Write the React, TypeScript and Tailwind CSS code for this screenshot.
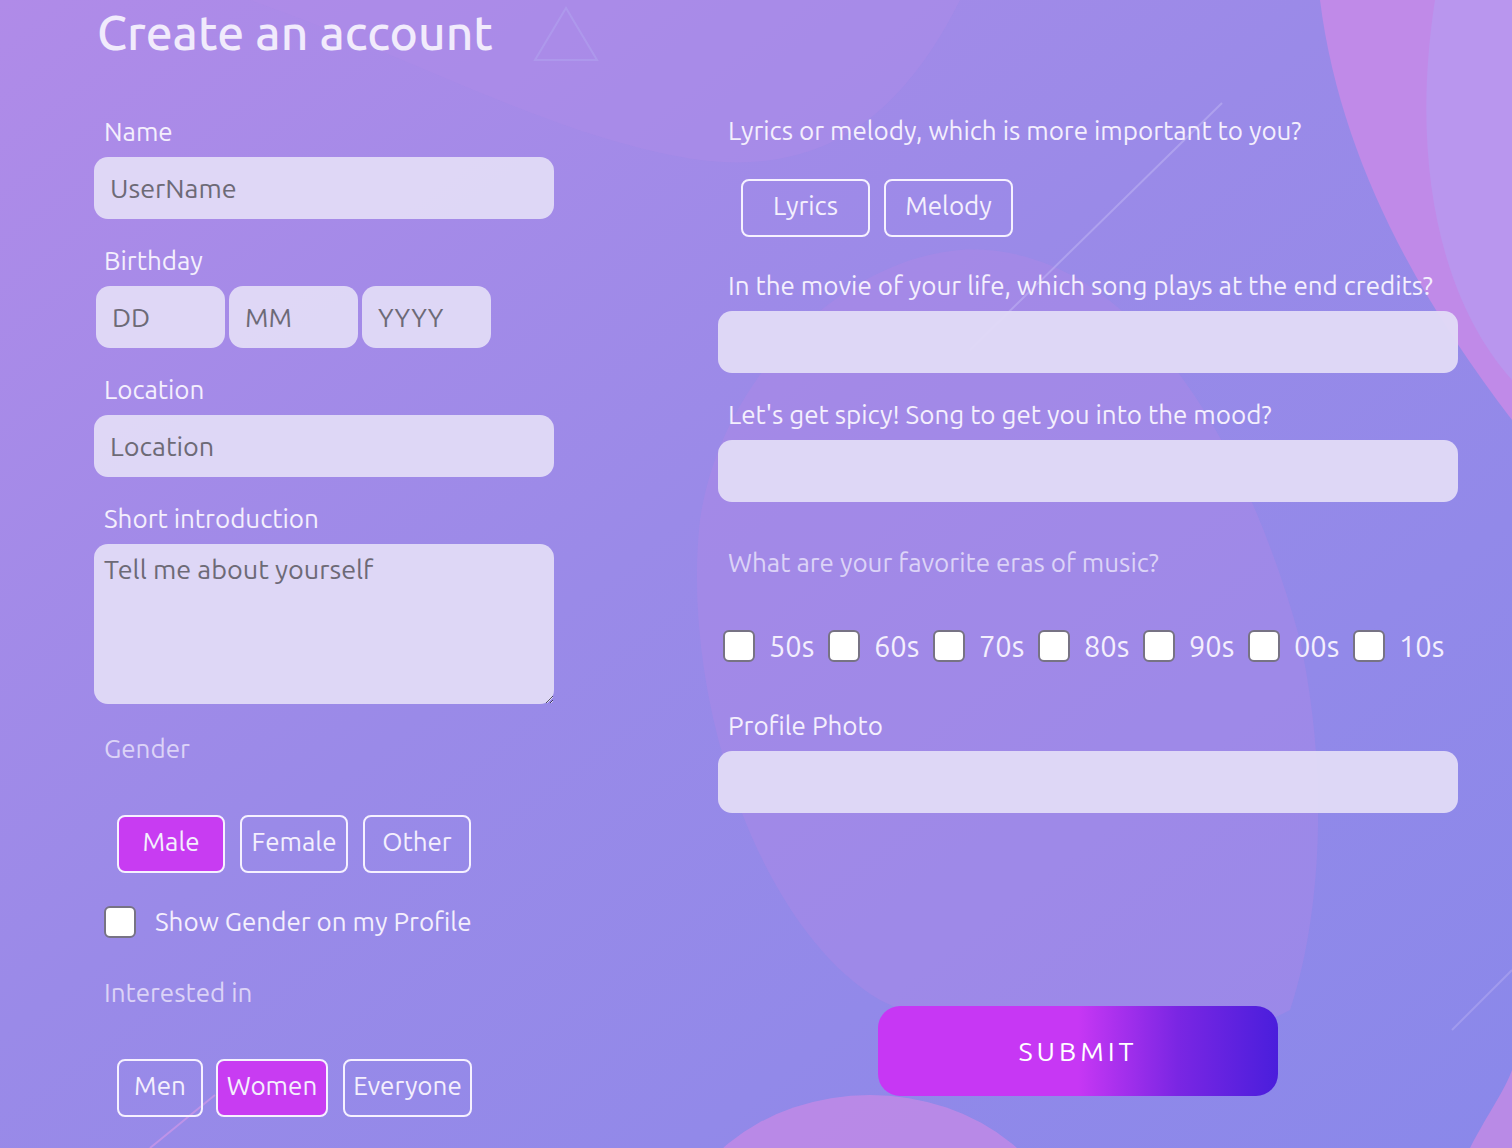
import React from "react";

const font = { fontFamily: '"Ubuntu", Lato, "Noto Sans", sans-serif' };

function Label({ children, dim = false }: { children: React.ReactNode; dim?: boolean }) {
  return (
    <div className={`text-[26px] leading-[30px] whitespace-nowrap ${dim ? "text-[#dcd3f7]" : "text-[#f4effd]"}`}>
      {children}
    </div>
  );
}

function Choice({
  children,
  active = false,
  w,
}: {
  children: React.ReactNode;
  active?: boolean;
  w: string;
}) {
  return (
    <button
      className={`${w} h-[58px] rounded-[8px] border-2 border-[#f6f1ff] text-[26px] text-[#f4effd] flex items-center justify-center pb-[5px] ${
        active ? "bg-[#c83cf2]" : "bg-transparent"
      }`}
    >
      {children}
    </button>
  );
}

function Box() {
  return (
    <input
      type="checkbox"
      className="appearance-none w-[32px] h-[32px] shrink-0 rounded-[6px] bg-white border-2 border-[#777384]"
    />
  );
}

const inputCls =
  "h-[62px] rounded-[14px] bg-[#e1dbf7]/95 text-[27px] text-[#5f5b68] placeholder:text-[#6d6a76] outline-none";

export default function App() {
  return (
    <div className="relative w-[1512px] h-[1148px] overflow-hidden bg-[#9a8ae8]" style={font}>
      <svg className="absolute inset-0" width="1512" height="1148" viewBox="0 0 1512 1148">
        <defs>
          <linearGradient id="bg" x1="0" y1="0" x2="1" y2="1">
            <stop offset="0" stopColor="#b08be8" />
            <stop offset="0.45" stopColor="#9a8ae8" />
            <stop offset="1" stopColor="#8a88ea" />
          </linearGradient>
        </defs>
        <rect width="1512" height="1148" fill="url(#bg)" />
        <path d="M250 0 C 420 60 560 140 700 160 C 820 175 900 120 960 0 Z" fill="#b38be9" opacity="0.35" />
        <path
          d="M700 520 C 720 380 840 260 960 250 C 1120 240 1240 420 1300 640 C 1330 780 1320 920 1290 1010 C 1200 1060 1000 1060 880 1000 C 760 930 680 700 700 520 Z"
          fill="#b58ae8"
          opacity="0.33"
        />
        <path d="M1320 0 C 1340 160 1420 300 1512 420 L1512 0 Z" fill="#c08ae8" />
        <path d="M1435 0 C 1410 160 1440 300 1512 380 L1512 0 Z" fill="#b996ee" />
        <ellipse cx="870" cy="1260" rx="200" ry="165" fill="#c08ae6" opacity="0.85" />
        <path d="M1470 1148 C 1490 1110 1505 1090 1512 1070 L1512 1148 Z" fill="#b98ae6" />
        <line x1="970" y1="350" x2="1222" y2="103" stroke="#c3b8f5" strokeWidth="2" opacity="0.5" />
        <line x1="1452" y1="1030" x2="1512" y2="970" stroke="#b6acf2" strokeWidth="2" opacity="0.5" />
        <line x1="150" y1="1148" x2="215" y2="1095" stroke="#d89ae8" strokeWidth="2" opacity="0.6" />
        <path d="M566 8 L 597 60 L 535 60 Z" fill="none" stroke="#b0a2ee" strokeWidth="2" opacity="0.6" />
      </svg>

      <div className="relative flex">
        {/* left column */}
        <div className="ml-[94px] w-[460px] flex flex-col">
          <h1 className="ml-[3px] mt-[2px] text-[48px] leading-[60px] font-medium text-[#f1ebfc] whitespace-nowrap">
            Create an account
          </h1>
          <div className="ml-[10px] mt-[55px]">
            <Label>Name</Label>
          </div>
          <input className={`${inputCls} mt-[10px] w-[460px] px-[16px]`} placeholder="UserName" />
          <div className="ml-[10px] mt-[27px]">
            <Label>Birthday</Label>
          </div>
          <div className="ml-[2px] mt-[10px] flex gap-[4px]">
            <input className={`${inputCls} w-[129px] px-[16px]`} placeholder="DD" />
            <input className={`${inputCls} w-[129px] px-[16px]`} placeholder="MM" />
            <input className={`${inputCls} w-[129px] px-[16px]`} placeholder="YYYY" />
          </div>
          <div className="ml-[10px] mt-[27px]">
            <Label>Location</Label>
          </div>
          <input className={`${inputCls} mt-[10px] w-[460px] px-[16px]`} placeholder="Location" />
          <div className="ml-[10px] mt-[27px]">
            <Label>Short introduction</Label>
          </div>
          <textarea
            className="mt-[10px] w-[460px] h-[160px] rounded-[14px] bg-[#e1dbf7]/95 text-[27px] leading-[32px] text-[#5f5b68] placeholder:text-[#6d6a76] outline-none px-[10px] py-[9px]"
            placeholder="Tell me about yourself"
          />
          <div className="ml-[10px] mt-[30px]">
            <Label dim>Gender</Label>
          </div>
          <div className="ml-[23px] mt-[51px] flex gap-[15px]">
            <Choice active w="w-[108px]">Male</Choice>
            <Choice w="w-[108px]">Female</Choice>
            <Choice w="w-[108px]">Other</Choice>
          </div>
          <div className="ml-[10px] mt-[33px] flex items-center gap-[19px]">
            <Box />
            <span className="text-[26px] leading-[32px] text-[#f4effd] whitespace-nowrap">Show Gender on my Profile</span>
          </div>
          <div className="ml-[10px] mt-[40px]">
            <Label dim>Interested in</Label>
          </div>
          <div className="ml-[23px] mt-[51px] flex">
            <Choice w="w-[86px]">Men</Choice>
            <div className="ml-[13px]">
              <Choice active w="w-[112px]">Women</Choice>
            </div>
            <div className="ml-[15px]">
              <Choice w="w-[129px]">Everyone</Choice>
            </div>
          </div>
        </div>

        {/* right column */}
        <div className="ml-[164px] w-[740px] flex flex-col pt-[116px]">
          <div className="ml-[10px]">
            <Label>Lyrics or melody, which is more important to you?</Label>
          </div>
          <div className="ml-[23px] mt-[33px] flex gap-[14px]">
            <Choice w="w-[129px]">Lyrics</Choice>
            <Choice w="w-[129px]">Melody</Choice>
          </div>
          <div className="ml-[10px] mt-[34px]">
            <Label>In the movie of your life, which song plays at the end credits?</Label>
          </div>
          <input className={`${inputCls} mt-[10px] w-[740px] px-[16px]`} />
          <div className="ml-[10px] mt-[27px]">
            <Label>Let's get spicy! Song to get you into the mood?</Label>
          </div>
          <input className={`${inputCls} mt-[10px] w-[740px] px-[16px]`} />
          <div className="ml-[10px] mt-[46px]">
            <Label dim>What are your favorite eras of music?</Label>
          </div>
          <div className="ml-[5px] mt-[52px] flex items-center">
            {["50s", "60s", "70s", "80s", "90s", "00s", "10s"].map((e) => (
              <div key={e} className="w-[105.6px] flex items-center gap-[14px]">
                <Box />
                <span className="text-[29px] leading-[32px] text-[#f4effd]">{e}</span>
              </div>
            ))}
          </div>
          <div className="ml-[10px] mt-[49px]">
            <Label>Profile Photo</Label>
          </div>
          <input className={`${inputCls} mt-[10px] w-[740px] px-[16px]`} />
          <button className="ml-[160px] mt-[193px] w-[400px] h-[90px] rounded-[22px] bg-[linear-gradient(90deg,#c737f4_0%,#c737f4_50%,#7a26e3_75%,#4a1edc_100%)] text-white text-[27px] tracking-[4px] flex items-center justify-center">
            SUBMIT
          </button>
        </div>
      </div>
    </div>
  );
}
